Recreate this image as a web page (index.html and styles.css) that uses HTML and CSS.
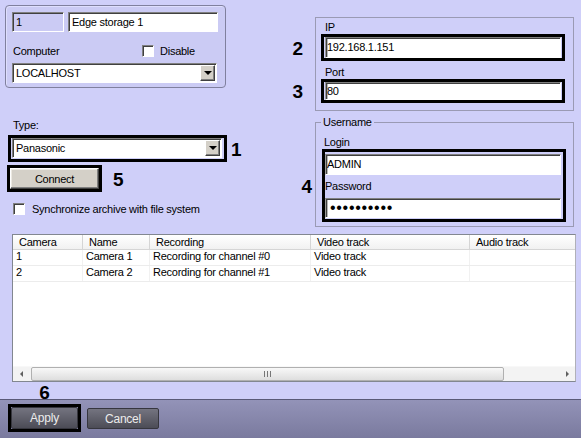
FILE: index.html
```html
<!DOCTYPE html>
<html>
<head>
<meta charset="utf-8">
<link rel="stylesheet" href="styles.css">
</head>
<body>
<div class="app">
  <div class="content">
    <div class="top">
      <div class="left">
        <div class="panel">
          <div class="r1">
            <div class="field dis">1</div>
            <div class="field name">Edge storage 1</div>
          </div>
          <div class="r2">
            <span class="comp">Computer</span>
            <span class="chk"><span class="box"></span>Disable</span>
          </div>
          <div class="combo host"><span class="val">LOCALHOST</span><span class="btn"><span class="tri"></span></span></div>
        </div>
        <div class="type-label">Type:</div>
        <div class="hl hl-type">
          <div class="combo ctype"><span class="val">Panasonic</span><span class="btn"><span class="tri"></span></span></div>
          <span class="callout cr c1">1</span>
        </div>
        <div class="hl hl-connect">
          <button class="wbtn">Connect</button>
          <span class="callout cr c5">5</span>
        </div>
        <div class="chk sync"><span class="box"></span>Synchronize archive with file system</div>
      </div>
      <div class="right">
        <div class="group ip">
          <div class="glbl">IP</div>
          <div class="hl hl-ip">
            <div class="field tight">192.168.1.151</div>
            <span class="callout cl c2">2</span>
          </div>
          <div class="glbl port">Port</div>
          <div class="hl hl-port">
            <div class="field tight pf">80</div>
            <span class="callout cl c3">3</span>
          </div>
        </div>
        <fieldset class="user">
          <legend>Username</legend>
          <div class="glbl login">Login</div>
          <div class="hl hl-cred">
            <div class="field tight">ADMIN</div>
            <div class="pwlbl">Password</div>
            <div class="field tight pwd">••••••••••</div>
            <span class="callout cl c4">4</span>
          </div>
        </fieldset>
      </div>
    </div>
    <div class="table">
      <div class="thead">
        <div>Camera</div><div>Name</div><div>Recording</div><div>Video track</div><div class="last">Audio track</div>
      </div>
      <div class="trow">
        <div>1</div><div>Camera 1</div><div>Recording for channel #0</div><div>Video track</div><div class="last"></div>
      </div>
      <div class="trow">
        <div>2</div><div>Camera 2</div><div>Recording for channel #1</div><div>Video track</div><div class="last"></div>
      </div>
      <div class="tfill"></div>
      <div class="hscroll">
        <span class="arrow"><span class="tl"></span></span>
        <span class="thumb"><span class="grip"></span></span>
        <span class="track"></span>
        <span class="arrow"><span class="tr"></span></span>
      </div>
    </div>
  </div>
  <div class="footer">
    <div class="hl hl-apply">
      <button class="dbtn apply">Apply</button>
      <span class="callout c6">6</span>
    </div>
    <button class="dbtn cancel">Cancel</button>
  </div>
</div>
</body>
</html>
```
FILE: styles.css
```css
* { box-sizing: border-box; }
html, body { margin: 0; padding: 0; }
body {
  width: 581px;
  height: 438px;
  overflow: hidden;
  font-family: "Liberation Sans", Arial, sans-serif;
  font-size: 11px;
  letter-spacing: -0.25px;
  color: #000;
  background: #cfcff9;
}
.app { display: flex; flex-direction: column; height: 438px; }
.content { height: 399px; background: #cfcff9; display: flex; flex-direction: column; }
.top { display: flex; height: 227px; }
.left { width: 315px; padding: 5px 0 0 5px; display: flex; flex-direction: column; align-items: flex-start; }
.right { width: 259px; padding-top: 17px; display: flex; flex-direction: column; }

/* top-left panel */
.panel {
  width: 221px;
  border: 1px solid #80809e;
  border-radius: 4px;
  padding: 6px 4px 4px 6px;
  background: #cbcbf4;
  box-shadow: inset 1px 1px 0 #dedefd;
}
.r1 { display: flex; gap: 4px; height: 20px; }
.field {
  height: 20px;
  background: #fff;
  border: 1px solid;
  border-color: #808080 #fff #fff #808080;
  box-shadow: inset 1px 1px 0 #404040;
  padding-left: 3px;
  line-height: 18px;
  white-space: nowrap;
  overflow: hidden;
}
.field.dis { width: 52px; background: transparent; }
.field.name { width: 150px; }
.r2 { display: flex; align-items: center; height: 16px; margin-top: 11px; }
.comp { width: 130px; padding-left: 1px; }
.chk { display: flex; align-items: center; }
.box {
  width: 12px; height: 12px;
  background: #fff;
  border: 1px solid;
  border-color: #808080 #fff #fff #808080;
  box-shadow: inset 1px 1px 0 #404040;
  margin-right: 6px;
}
.combo {
  display: flex;
  align-items: center;
  height: 20px;
  background: #fff;
  border: 1px solid;
  border-color: #808080 #fff #fff #808080;
  box-shadow: inset 1px 1px 0 #404040;
  padding: 1px 1px 1px 3px;
}
.combo.host { width: 205px; margin-top: 4px; }
.combo.ctype { width: 210px; }
.combo .val { flex: 1; }
.combo .btn {
  width: 15px; height: 16px;
  background: #d4d0c8;
  border: 1px solid;
  border-color: #fff #404040 #404040 #fff;
  box-shadow: inset -1px -1px 0 #808080;
  display: flex; align-items: center; justify-content: center;
}
.tri { width: 0; height: 0; border-left: 4px solid transparent; border-right: 4px solid transparent; border-top: 4px solid #000; }

/* highlights and callouts */
.hl { position: relative; border: 3px solid #000; }
.callout {
  position: absolute;
  top: 50%;
  transform: translateY(-50%);
  font-size: 19px;
  font-weight: bold;
  line-height: 1;
  letter-spacing: 0;
}
.cr { left: calc(100% + 7px); }
.c5 { left: calc(100% + 14px); }
.cl { right: calc(100% + 21px); }
.c4 { right: calc(100% + 13px); }
.c6 { top: auto; bottom: calc(100% + 5px); left: 50%; transform: translateX(-50%); }

.type-label { margin: 31px 0 0 8px; line-height: 13px; }
.hl-type { margin: 3px 0 0 3px; padding: 0 2px 1px 1px; }
.hl-connect { margin: 3px 0 0 2px; }
.wbtn {
  display: block;
  width: 89px; height: 21px;
  padding: 0;
  background: #d4d0c8;
  border: 1px solid;
  border-color: #fff #404040 #404040 #fff;
  box-shadow: inset -1px -1px 0 #808080, inset 1px 1px 0 #ece9e2;
  font: inherit;
  letter-spacing: -0.25px;
  color: #000;
}
.sync { margin: 11px 0 0 8px; }
.sync .box { margin-right: 7px; }

/* right groups */
.group.ip {
  height: 94px;
  border: 1px solid #9a9ab4;
  padding: 3px 0 0 0;
}
.glbl { margin-left: 9px; line-height: 13px; }
.glbl.port { margin-top: 5px; }
.hl-ip, .hl-port, .hl-cred { margin-left: 5px; width: 244px; padding: 0 1px; }
.field.tight { padding-left: 1px; border-left-color: #9a9a9a; box-shadow: inset 1px 1px 0 #404040, inset 2px 0 0 #b8b8b8; }
.hl-ip .field { height: 21px; line-height: 19px; width: 236px; }
.hl-port .field { height: 18px; line-height: 16px; width: 236px; }
fieldset.user {
  margin: 5px 0 0 0;
  padding: 7px 0 4px 0;
  min-width: 0;
  border: 1px solid #9a9ab4;
}
legend { padding: 0 2px; margin-left: 5px; line-height: 13px; }
.glbl.login { margin-left: 8px; }
.hl-cred { margin-left: 6px; padding: 2px 2px 1px 0; }
.hl-cred .field { width: 236px; height: 21px; line-height: 19px; }
.pwlbl { padding: 5px 0; line-height: 13px; }
.hl-cred .field.pwd { height: 20px; line-height: 18px; font-size: 16px; letter-spacing: 0.7px; padding-left: 4px; }

/* table */
.table {
  margin: 7px 0 0 12px;
  width: 564px;
  height: 148px;
  border: 1px solid #828790;
  border-right-color: #b0b0b8;
  background: #fff;
  display: flex;
  flex-direction: column;
}
.thead, .trow { display: grid; grid-template-columns: 70px 67px 161px 159px 1fr; }
.thead { height: 15px; border-bottom: 1px solid #d5d5d5; background: linear-gradient(#ffffff, #f1f1f1); }
.thead div { padding-left: 6px; line-height: 14px; border-right: 1px solid #d5d5d5; white-space: nowrap; }
.trow { height: 16px; border-bottom: 1px solid #ececec; }
.trow div { padding-left: 3px; line-height: 13px; border-right: 1px solid #f1f1f1; white-space: nowrap; }
.thead .last, .trow .last { border-right: none; }
.tfill { flex: 1; }
.hscroll { height: 15px; display: flex; align-items: center; background: #f3f3f3; border-top: 1px solid #f8f8f8; }
.arrow { width: 16px; height: 15px; display: flex; align-items: center; justify-content: center; }
.tl { width: 0; height: 0; border-top: 3px solid transparent; border-bottom: 3px solid transparent; border-right: 3px solid #606060; }
.tr { width: 0; height: 0; border-top: 3px solid transparent; border-bottom: 3px solid transparent; border-left: 3px solid #606060; }
.thumb {
  margin-left: 2px;
  width: 473px;
  height: 14px;
  border: 1px solid #b0b0b0;
  border-radius: 2px;
  background: linear-gradient(#f8f8f8, #dedede);
  display: flex; align-items: center; justify-content: center;
}
.grip { width: 7px; height: 6px; background: repeating-linear-gradient(90deg, #777 0 1px, transparent 1px 3px); }
.track { flex: 1; }

/* footer */
.footer {
  height: 39px;
  background: linear-gradient(#9393b8, #7a7a9e);
  border-top: 1px solid #5a5a78;
  display: flex;
  align-items: flex-start;
  padding: 4px 0 0 8px;
  gap: 6px;
}
.dbtn {
  display: block;
  height: 22px;
  padding: 0;
  border: 1px solid #36363e;
  border-radius: 2px;
  background: linear-gradient(#747480, #4c4c56);
  color: #ececec;
  font: inherit;
  font-size: 12px;
  letter-spacing: -0.25px;
}
.apply { width: 67px; }
.cancel { width: 72px; height: 21px; margin-top: 4px; }
```
